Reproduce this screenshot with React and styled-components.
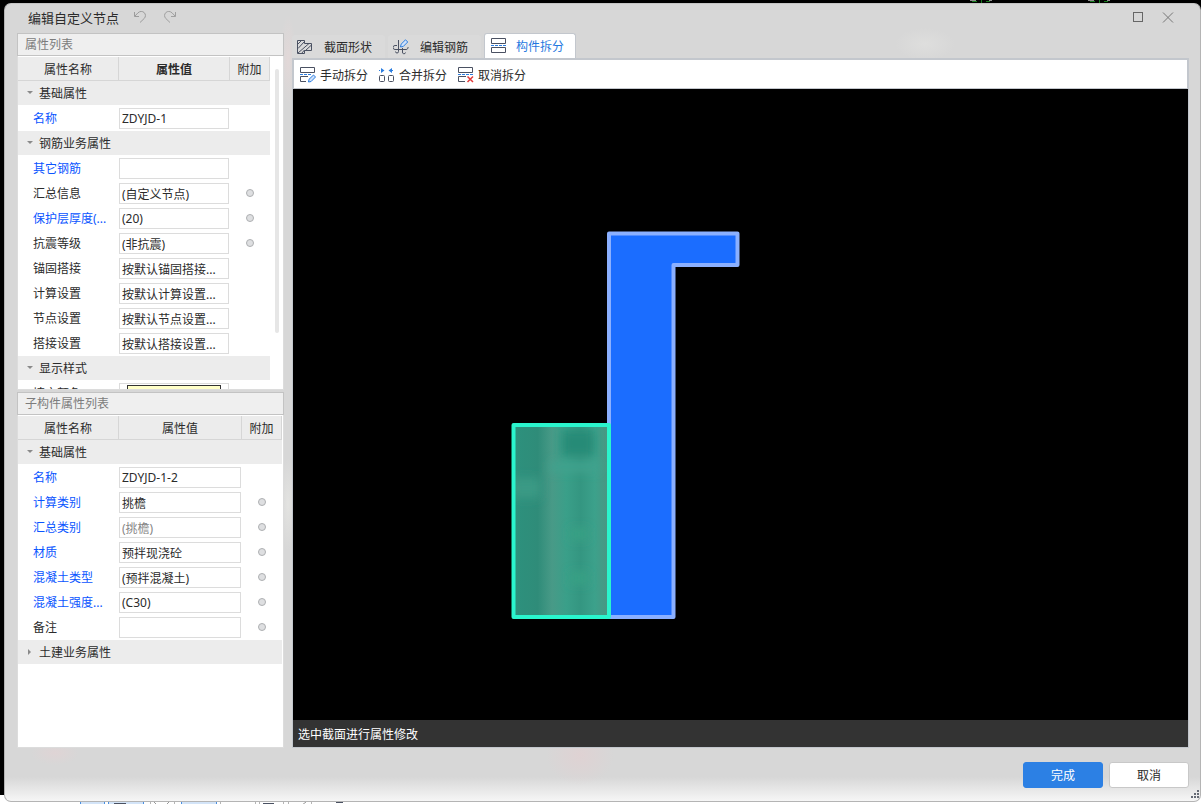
import React, { useState } from 'react';
import styled, { createGlobalStyle, css } from 'styled-components';

const GlobalStyle = createGlobalStyle`
  *, *::before, *::after { box-sizing: border-box; }
  html, body, #root { height: 100%; }
  body {
    margin: 0;
    background: linear-gradient(#000 0, #000 calc(100% - 9px), #fff calc(100% - 9px));
    color: #2b2b2b;
    font: 12px/16px "Noto Sans", "Noto Sans CJK SC", sans-serif;
    overflow: hidden;
  }
  button, input { font: inherit; color: inherit; }
  button { cursor: pointer; }
`;

const Desktop = styled.div`
  height: 100vh;
  display: flex;
  flex-direction: column;
  padding-left: 4px;
`;

const Sliver = styled.svg`
  display: block;
  flex: none;
  width: 100%;
`;

const Dialog = styled.main`
  flex: 1;
  min-height: 0;
  display: flex;
  flex-direction: column;
  position: relative;
  background:
    radial-gradient(ellipse 30px 16px at 920px 40px, #dededd, transparent),
    radial-gradient(ellipse 34px 30px at 575px calc(100% - 46px), #dfd2d3, transparent),
    radial-gradient(ellipse 24px 12px at 50px calc(100% - 48px), #dfd4d5, transparent),
    radial-gradient(ellipse 8px 46px at 283px 56px, #e2d8d8, transparent),
    radial-gradient(ellipse 8px 46px at 283px 500px, #e3e3e1, transparent),
    linear-gradient(#d7d7d7 0, #d7d7d7 calc(100% - 24px), #f6f6f6 100%);
  border: 1px solid #b4b4b4;
  border-top-color: #c4c4c4;
  border-radius: 7px;
`;

const TitleBar = styled.header`
  height: 29px;
  flex: none;
  display: flex;
  align-items: center;
  padding: 0 26px 2px 23px;
`;

const Title = styled.h1`
  margin: 0 14px 0 0;
  font-size: 13px;
  line-height: 20px;
  font-weight: 400;
`;

const IconButton = styled.button`
  border: 0;
  background: none;
  padding: 0;
  margin-right: ${(p) => p.$gap || 0}px;
  display: flex;
`;

const Spacer = styled.div`flex: 1;`;

const Content = styled.div`
  flex: 1;
  min-height: 0;
  display: flex;
  gap: 8px;
  padding: 0 11px 0 12px;
`;

const Sidebar = styled.aside`
  width: 267px;
  flex: none;
  display: flex;
  flex-direction: column;
  gap: 2px;
`;

const Panel = styled.section`
  display: flex;
  flex-direction: column;
  min-height: 0;
  flex: ${(p) => (p.$grow ? '1' : '0 0 357px')};
  background: #fff;
  border: 1px solid #dcdcdc;
  border-top: 0;
`;

const PanelTitle = styled.h2`
  flex: none;
  margin: 0 -1px 1px;
  height: 23px;
  padding: 0 7px;
  border: 1px solid #c3c3c3;
  background: #efefef;
  color: #7c7c7c;
  font-size: 12px;
  line-height: 22px;
  font-weight: 400;
`;

const PanelBody = styled.div`
  flex: 1;
  min-height: 0;
  display: flex;
  align-items: flex-start;
  padding-right: 1px;
  overflow: hidden;
`;

const Table = styled.table`
  flex: 1;
  min-width: 0;
  table-layout: fixed;
  border-collapse: separate;
  border-spacing: 0;
`;

const HeadCell = styled.th`
  width: ${(p) => (p.$width ? `${p.$width}px` : 'auto')};
  height: 24px;
  padding: 2px 0 0;
  background: #ececec;
  border-right: 1px solid #d6d6d6;
  border-bottom: 1px solid #d6d6d6;
  font-weight: ${(p) => (p.$strong ? 700 : 400)};
  text-align: center;
`;

const GroupCell = styled.th`
  height: 25px;
  padding: 1px 0 0;
  border-bottom: 1px solid #fff;
  background: #ececec;
  font-weight: 400;
  text-align: left;
`;

const GroupToggle = styled.button`
  display: flex;
  align-items: center;
  gap: 5px;
  border: 0;
  padding: 0 0 0 8px;
  background: none;

  svg { margin-bottom: 2px; }
`;

const NameCell = styled.th`
  height: 25px;
  padding: 0 8px 0 15px;
  color: ${(p) => (p.$key ? '#0a55ff' : 'inherit')};
  font-weight: 400;
  text-align: left;
  white-space: nowrap;
  overflow: hidden;
`;

const ValueCell = styled.td`
  height: 25px;
  padding: 0 1px 0 0;
`;

const Field = styled.input`
  display: block;
  width: 100%;
  height: 21px;
  padding: 0 2px;
  border: 1px solid #dcdcdc;
  background: #fff;
  outline: 0;
  text-overflow: ellipsis;
  color: ${(p) => (p.$muted ? '#858585' : '#2b2b2b')};
`;

const ColorFrame = styled.div`
  height: 21px;
  padding: 1px 7px;
  border: 1px solid #dcdcdc;
`;

const ColorButton = styled.button`
  display: block;
  width: 100%;
  height: 17px;
  padding: 0;
  border: 1px solid #333;
  background: #ffffc8;
`;

const ExtraCell = styled.td`
  padding: 0 0 1px;
  text-align: center;
`;

const Radio = styled.input`
  appearance: none;
  display: block;
  width: 8px;
  height: 8px;
  margin: 0 auto;
  border: 1px solid #aeb0b2;
  border-radius: 50%;
  background: #dedfe1;
`;

const Scrollbar = styled.div`
  flex: none;
  width: 12px;
  padding: 12px 3px 0 5px;

  &::before {
    content: '';
    display: block;
    width: 4px;
    height: 264px;
    border-radius: 2px;
    background: #e6e6e6;
  }
`;

const Workspace = styled.section`
  flex: 1;
  min-width: 0;
  display: flex;
  flex-direction: column;
`;

const Tabs = styled.nav`
  flex: none;
  height: 25px;
  display: flex;
  align-items: flex-end;
  gap: 3px;
`;

const Tab = styled.button`
  height: 23px;
  min-width: 93px;
  display: flex;
  align-items: center;
  gap: 11px;
  padding: 2px 5px 0;
  border: 0;
  border-radius: 3px 3px 0 0;
  background: #dadada;
  white-space: nowrap;

  svg { margin-bottom: 2px; }

  ${(p) => p.$active && css`
    height: 25px;
    min-width: 92px;
    gap: 9px;
    padding: 1px 6px 0;
    background: #fff;
    border: 1px solid #c3c7cd;
    border-bottom: 0;
    color: #1f78e0;
  `}
`;

const Toolbar = styled.div`
  flex: none;
  height: 31px;
  display: flex;
  align-items: center;
  gap: 11px;
  padding: 4px 6px 0;
  background: #fff;
  border: 1px solid #c3c7cd;
  border-width: 2px 2px 1px 2px;
`;

const Tool = styled.button`
  display: flex;
  align-items: center;
  gap: 4px;
  padding: 0;
  border: 0;
  background: none;
  white-space: nowrap;

  svg { margin-bottom: 3px; }
`;

const Viewport = styled.div`
  flex: 1;
  min-height: 0;
  overflow: hidden;
  background: #000;
  border: 1px solid #c3c7cd;
  border-width: 0 1px;
`;

const StatusBar = styled.div`
  flex: none;
  height: 28px;
  padding: 0 5px;
  background: #333;
  border: 1px solid #c3c7cd;
  border-top: 0;
  color: #fff;
  line-height: 29px;
`;

const Footer = styled.footer`
  flex: none;
  height: 53px;
  display: flex;
  justify-content: flex-end;
  align-items: flex-start;
  gap: 6px;
  padding: 14px 11px 0;
`;

const ActionButton = styled.button`
  width: 80px;
  height: 26px;
  padding: 1px 0 0;
  border: 1px solid ${(p) => (p.$primary ? '#2c80e4' : '#c8c8c8')};
  border-radius: 3px;
  background: ${(p) => (p.$primary ? '#2c80e4' : '#fff')};
  color: ${(p) => (p.$primary ? '#fff' : '#2b2b2b')};
`;

const Grip = styled.svg`
  position: absolute;
  right: 1px;
  bottom: 3px;
`;

const INK = '#4a5162';
const BLUE = '#2b7de0';

const UndoIcon = () => (
  <svg width="14" height="14" viewBox="0 0 14 14" fill="none" stroke="#9c9c9c">
    <path d="M1.500 1v4.500H6M1.800 5.200L5 1.800C7 0 9.500 0 11.200 1.600c1.700 1.700 1.600 4.200 0 5.900L7 11.500" />
  </svg>
);
const RedoIcon = () => (
  <svg width="14" height="14" viewBox="0 0 14 14" fill="none" stroke="#a0a0a0">
    <path d="M12.500 1v4.500H8M12.200 5.200L9 1.800C7 0 4.500 0 2.800 1.600c-1.700 1.700-1.600 4.200 0 5.900L7 11.500" />
  </svg>
);
const SectionIcon = () => (
  <svg width="16" height="16" viewBox="0 0 16 16" fill="none" stroke={INK}>
    <path d="M.5 1.500h7v3h7v7h-7v3h-7z" />
    <path d="M1 5l3.500-3.500M1 9.500l6.500-7M1 14L12 4.500M4.500 14.500l3-3.500M8.500 11.500L14.500 6" />
  </svg>
);
const RebarIcon = () => (
  <svg width="16" height="16" viewBox="0 0 16 16" fill="none" stroke={INK}>
    <path d="M5.500 1V12.500a1.500 1.500 0 0 1-3 0M4 6.500H2a2 2 0 0 0 0 4h11a2 2 0 0 0 2-2.500M9.500 9v4a1.500 1.500 0 0 0 3 .5" />
    <path d="M7.500 8l.6-2.800L12.500.8l2.200 2.200-4.500 4.500z" stroke={BLUE} fill="#cfe2fb" />
  </svg>
);
const SplitIcon = () => (
  <svg width="16" height="16" viewBox="0 0 16 16" fill="none" stroke={INK}>
    <path d="M.5.5h14v5H.5zM.5 9.500h14v5H.5z" />
    <path d="M0 7.500h15" stroke={BLUE} strokeDasharray="3 1" />
  </svg>
);
const ManualSplitIcon = () => (
  <svg width="16" height="16" viewBox="0 0 16 16" fill="none" stroke={INK}>
    <path d="M.5.5h14v5H.5zM6 14.500H.5v-5H8" />
    <path d="M0 7.500h11" stroke={BLUE} strokeDasharray="3 1" />
    <path d="M8.500 15l.5-2.700L13.500 8l2 2-4.400 4.500z" stroke={BLUE} fill="#cfe2fb" />
  </svg>
);
const MergeIcon = () => (
  <svg width="16" height="16" viewBox="0 0 16 16" fill="none" stroke={INK}>
    <rect x=".5" y="8.500" width="5" height="6" rx="1" />
    <rect x="9.500" y="8.500" width="5" height="6" rx="1" />
    <path d="M2 1L5.500 3.500 2 6zM13 1L9.500 3.500 13 6z" stroke="none" fill={BLUE} />
    <path d="M0 3.500h2M13 3.500h2" stroke={BLUE} strokeDasharray="1 1" />
  </svg>
);
const CancelSplitIcon = () => (
  <svg width="16" height="16" viewBox="0 0 16 16" fill="none" stroke={INK}>
    <path d="M.5.5h14v5H.5zM7 14.500H.5v-5H8" />
    <path d="M0 7.500h15" stroke={BLUE} strokeDasharray="3 1" />
    <path d="M9.500 9.500l5.500 5.500M15 9.500L9.500 15" stroke="#e03a3a" strokeWidth="1.500" />
  </svg>
);
const Arrow = ({ open }) => (
  <svg width="8" height="8" viewBox="0 0 8 8" fill="#8a8a8a">
    <path d={open ? 'M1 2h6L4 5z' : 'M2 1v6l3-3z'} />
  </svg>
);

const mainRows = [
  { group: '基础属性' },
  { name: '名称', value: 'ZDYJD-1', linked: true },
  { group: '钢筋业务属性' },
  { name: '其它钢筋', value: '', linked: true },
  { name: '汇总信息', value: '(自定义节点)', extra: true },
  { name: '保护层厚度(...', value: '(20)', linked: true, extra: true },
  { name: '抗震等级', value: '(非抗震)', extra: true },
  { name: '锚固搭接', value: '按默认锚固搭接...' },
  { name: '计算设置', value: '按默认计算设置...' },
  { name: '节点设置', value: '按默认节点设置...' },
  { name: '搭接设置', value: '按默认搭接设置...' },
  { group: '显示样式' },
  { name: '填充颜色', color: true },
];

const childRows = [
  { group: '基础属性' },
  { name: '名称', value: 'ZDYJD-1-2', linked: true },
  { name: '计算类别', value: '挑檐', linked: true, extra: true },
  { name: '汇总类别', value: '(挑檐)', linked: true, extra: true, muted: true },
  { name: '材质', value: '预拌现浇砼', linked: true, extra: true },
  { name: '混凝土类型', value: '(预拌混凝土)', linked: true, extra: true },
  { name: '混凝土强度...', value: '(C30)', linked: true, extra: true },
  { name: '备注', value: '', extra: true },
  { group: '土建业务属性', closed: true },
];

function PropertyTable({ id, rows, strong }) {
  return (
    <Table>
      <thead>
        <tr>
          <HeadCell $width={101}>属性名称</HeadCell>
          <HeadCell $strong={strong}>属性值</HeadCell>
          <HeadCell $width={40}>附加</HeadCell>
        </tr>
      </thead>
      <tbody>
        {rows.map((row, i) => {
          if (row.group) {
            return (
              <tr key={i}>
                <GroupCell colSpan={3}>
                  <GroupToggle aria-expanded={!row.closed}>
                    <Arrow open={!row.closed} />
                    {row.group}
                  </GroupToggle>
                </GroupCell>
              </tr>
            );
          }
          const fieldId = `${id}-${i}`;
          return (
            <tr key={i}>
              <NameCell $key={row.linked}><label htmlFor={fieldId}>{row.name}</label></NameCell>
              <ValueCell>
                {row.color
                  ? <ColorFrame><ColorButton id={fieldId} /></ColorFrame>
                  : <Field id={fieldId} defaultValue={row.value} $muted={row.muted} />}
              </ValueCell>
              <ExtraCell>
                {row.extra && <Radio type="radio" name={`${fieldId}-extra`} aria-label={`附加 ${row.name}`} />}
              </ExtraCell>
            </tr>
          );
        })}
      </tbody>
    </Table>
  );
}

const Drawing = () => (
  <svg width="895" height="631" viewBox="293 89 895 631">
    <defs>
      <linearGradient id="base">
        <stop offset="0" stopColor="#2d917d" />
        <stop offset=".25" stopColor="#2f8c79" />
        <stop offset=".4" stopColor="#489a87" />
        <stop offset=".55" stopColor="#3a9f89" />
        <stop offset=".7" stopColor="#349681" />
        <stop offset=".85" stopColor="#3ca18b" />
        <stop offset="1" stopColor="#4b9582" />
      </linearGradient>
      <filter id="soft" x="-100%" y="-100%" width="300%" height="300%">
        <feGaussianBlur stdDeviation="5" />
      </filter>
      <clipPath id="slab"><rect x="514" y="425" width="95" height="192" /></clipPath>
    </defs>
    <path d="M609 233.500H737.500V265H673.500V617H609z" fill="#1b6dff" stroke="#8bb0ff" strokeWidth="4" strokeLinejoin="round" />
    <g clipPath="url(#slab)">
      <rect x="514" y="425" width="95" height="192" fill="url(#base)" />
      <g filter="url(#soft)">
        <rect x="562" y="430" width="32" height="26" fill="#288b77" />
        <rect x="512" y="478" width="28" height="20" fill="#3a9a85" />
        <rect x="550" y="462" width="50" height="10" fill="#3fa28d" />
        <rect x="570" y="528" width="18" height="12" fill="#38a184" />
        <rect x="570" y="572" width="18" height="12" fill="#38a184" />
      </g>
    </g>
    <rect x="513.500" y="425" width="95.500" height="192" fill="none" stroke="#2af5cd" strokeWidth="4" strokeLinejoin="round" />
  </svg>
);

const TopSliver = () => (
  <Sliver height="3" aria-hidden="true">
    {[966, 1084].map((x) => (
      <g key={x}>
        <path d={`M${x} .5h6M${x + 19} .5h3`} stroke="#8c8c8c" />
        <path d={`M${x + 2} 1.500h5M${x + 11.5} 0v3M${x + 16} 1.500h4`} stroke="#15791b" />
      </g>
    ))}
  </Sliver>
);

const BottomSliver = () => (
  <Sliver height="2" aria-hidden="true">
    <path d="M77 1.500h23M105 1.500h34M178 1.500h34" stroke="#d3e4f8" strokeWidth="3" />
    <path d="M76.500 0v3M100.500 0v3M104.500 0v3M139.500 0v3M177.500 0v3M212.500 0v3" stroke="#4a8fe0" />
    <path d="M146.500 0v3M170.500 0v3M216.500 0v3M251.500 0v3M255.500 0v3M279.500 0v3M284.500 0v3M307.500 0v3" stroke="#b5b5b5" />
    <path d="M110 1.500h12M259 1.500h11M332 .5h7" stroke="#4a5162" />
    <path d="M150 0l3 3M165 0l-3 3M302 0l-4 3" stroke="#999" />
  </Sliver>
);

const tabs = [
  { label: '截面形状', Icon: SectionIcon },
  { label: '编辑钢筋', Icon: RebarIcon },
  { label: '构件拆分', Icon: SplitIcon },
];

const tools = [
  { label: '手动拆分', Icon: ManualSplitIcon },
  { label: '合并拆分', Icon: MergeIcon },
  { label: '取消拆分', Icon: CancelSplitIcon },
];

export default function App() {
  const [active, setActive] = useState(2);
  return (
    <>
      <GlobalStyle />
      <Desktop>
        <TopSliver />
        <Dialog>
          <TitleBar>
            <Title>编辑自定义节点</Title>
            <IconButton aria-label="撤销" $gap={16}><UndoIcon /></IconButton>
            <IconButton aria-label="重做"><RedoIcon /></IconButton>
            <Spacer />
            <IconButton aria-label="最大化" $gap={18}>
              <svg width="12" height="12" fill="none" stroke="#666"><rect x="1.500" y=".5" width="9" height="9" /></svg>
            </IconButton>
            <IconButton aria-label="关闭">
              <svg width="12" height="12" fill="none" stroke="#777"><path d="M1 .5l10 10M11 .5l-10 10" /></svg>
            </IconButton>
          </TitleBar>
          <Content>
            <Sidebar>
              <Panel>
                <PanelTitle>属性列表</PanelTitle>
                <PanelBody>
                  <PropertyTable id="main" rows={mainRows} strong />
                  <Scrollbar />
                </PanelBody>
              </Panel>
              <Panel $grow>
                <PanelTitle>子构件属性列表</PanelTitle>
                <PanelBody>
                  <PropertyTable id="child" rows={childRows} />
                </PanelBody>
              </Panel>
            </Sidebar>
            <Workspace>
              <Tabs>
                {tabs.map(({ label, Icon }, i) => (
                  <Tab key={label} $active={i === active} onClick={() => setActive(i)}>
                    <Icon />{label}
                  </Tab>
                ))}
              </Tabs>
              <Toolbar>
                {tools.map(({ label, Icon }) => (
                  <Tool key={label}><Icon />{label}</Tool>
                ))}
              </Toolbar>
              <Viewport><Drawing /></Viewport>
              <StatusBar>选中截面进行属性修改</StatusBar>
            </Workspace>
          </Content>
          <Footer>
            <ActionButton $primary>完成</ActionButton>
            <ActionButton>取消</ActionButton>
          </Footer>
          <Grip width="8" height="8" fill="#666b75">
            <path d="M6 0h2v2H6zM3 3h2v2H3zM6 3h2v2H6zM0 6h2v2H0zM3 6h2v2H3zM6 6h2v2H6z" />
          </Grip>
        </Dialog>
        <BottomSliver />
      </Desktop>
    </>
  );
}
